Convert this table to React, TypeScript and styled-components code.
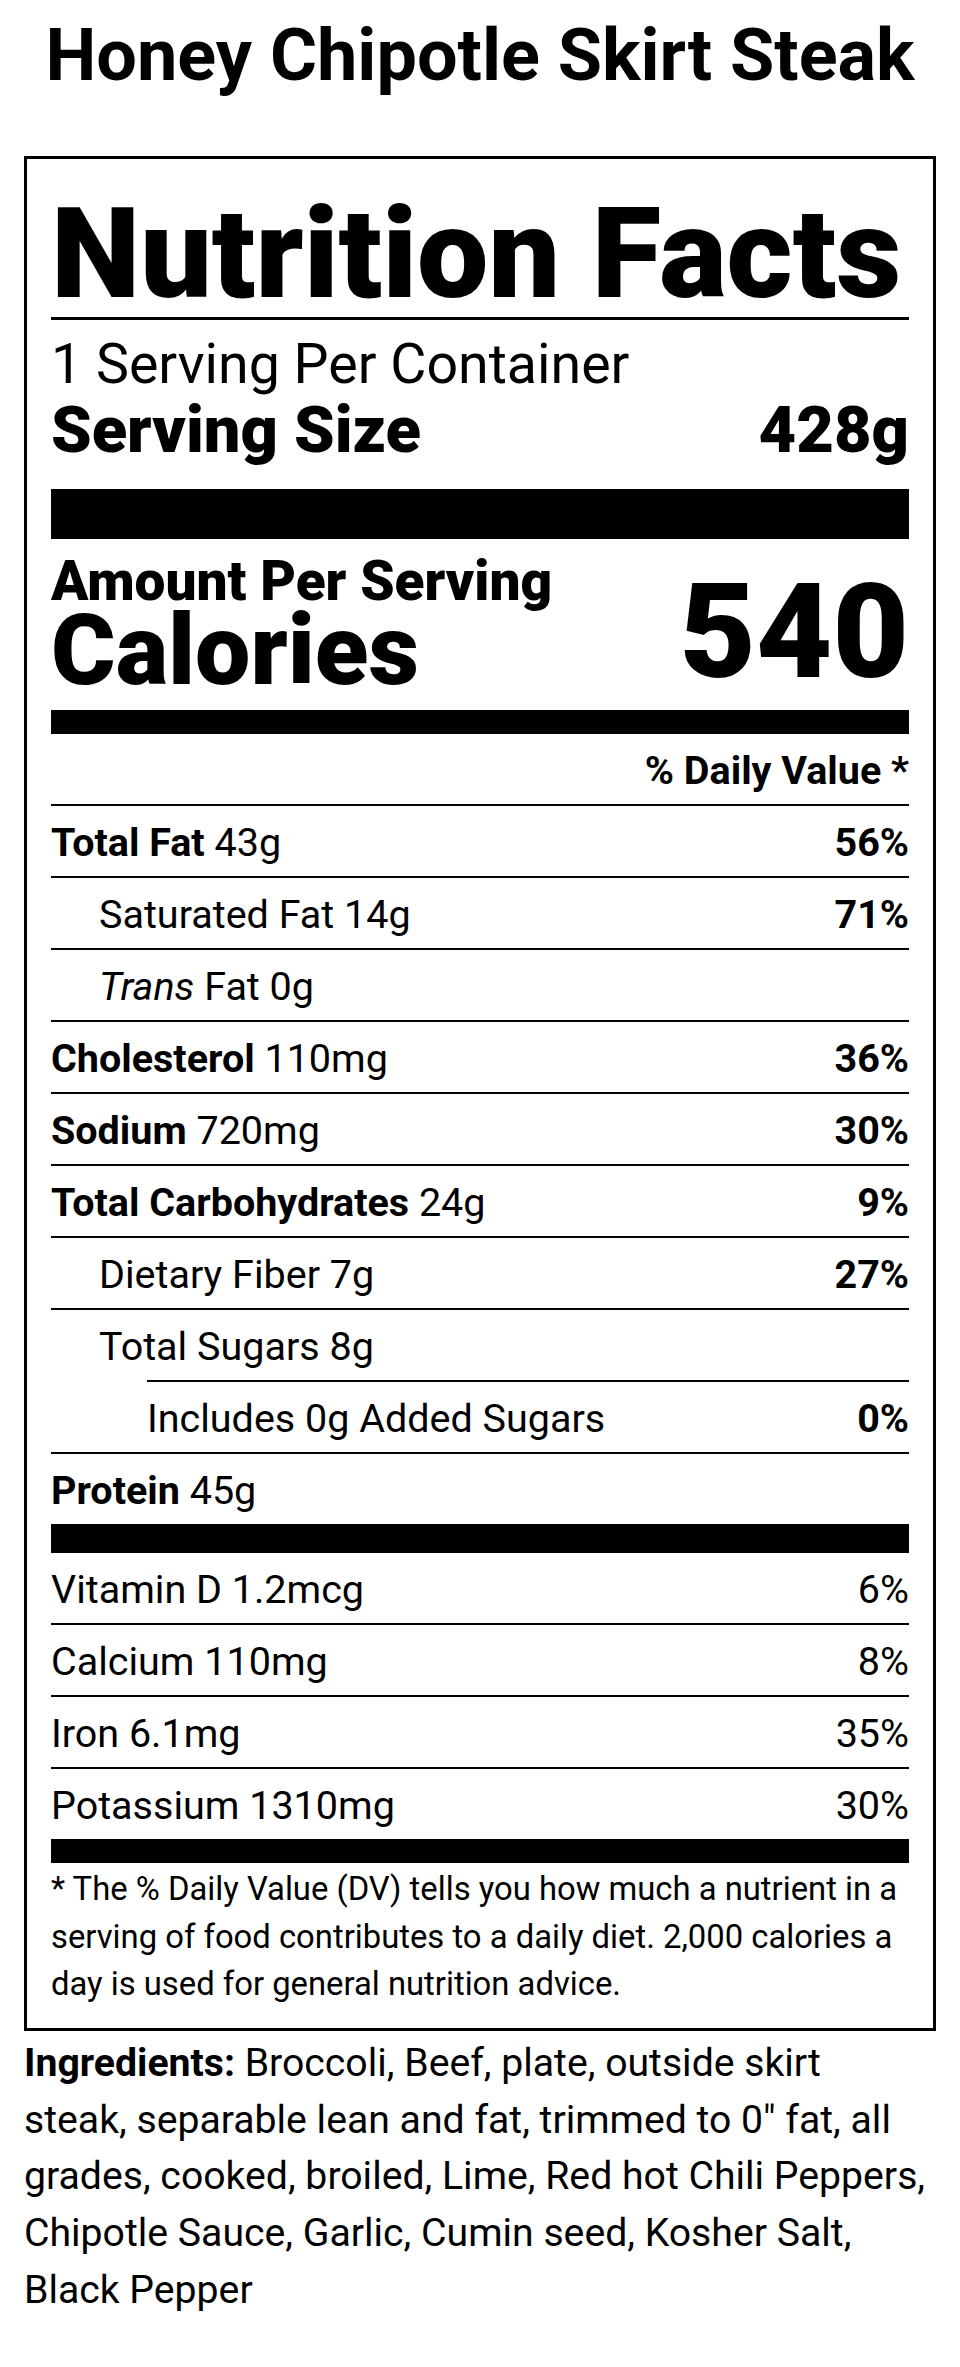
import React from 'react';
import styled, { createGlobalStyle } from 'styled-components';

const GlobalStyle = createGlobalStyle`
  html, body { margin: 0; padding: 0; background: #fff; }
  body {
    font-family: Roboto, "Liberation Sans", Arial, sans-serif;
    color: #000;
  }
`;

const Page = styled.main`
  padding: 14px 24px 40px;
`;

const Title = styled.h1`
  margin: 0 0 58px;
  font-size: 72px;
  font-weight: 700;
  line-height: 84px;
  text-align: center;
`;

const Label = styled.section`
  border: 3px solid #000;
  padding: 32px 24px 19px;
`;

const Heading = styled.h2`
  margin: 0;
  font-size: 127px;
  font-weight: 900;
  line-height: 126px;
  white-space: nowrap;
  border-bottom: 3px solid #000;
`;

const Servings = styled.div`
  margin-top: 14px;
  font-size: 55.5px;
  font-weight: 400;
  line-height: 61px;
`;

const ServingSize = styled.div`
  display: flex;
  justify-content: space-between;
  font-size: 65px;
  font-weight: 900;
  line-height: 70px;
`;

const Bar = styled.div<{ $h: number; $top?: number; $inset?: number }>`
  height: ${(p) => p.$h}px;
  margin-top: ${(p) => p.$top ?? 0}px;
  margin-left: ${(p) => p.$inset ?? 0}px;
  background: #000;
`;

const CaloriesBlock = styled.div`
  display: flex;
  justify-content: space-between;
  align-items: flex-end;
  margin-top: 17px;
`;

const CaloriesLeft = styled.div`
  display: flex;
  flex-direction: column;
`;

const AmountLabel = styled.div`
  font-size: 55px;
  font-weight: 900;
  line-height: 50px;
`;

const CaloriesLabel = styled.div`
  font-size: 98.5px;
  font-weight: 900;
  line-height: 90px;
`;

const CaloriesValue = styled.div`
  font-size: 132px;
  font-weight: 900;
  line-height: 128px;
`;

const Row = styled.div<{ $indent?: number; $padTop?: number; $padBottom?: number; $end?: boolean }>`
  display: flex;
  justify-content: ${(p) => (p.$end ? 'flex-end' : 'space-between')};
  align-items: baseline;
  padding: ${(p) => p.$padTop ?? 15.5}px 0 ${(p) => p.$padBottom ?? 10.5}px
    ${(p) => p.$indent ?? 0}px;
  font-size: 39.5px;
  line-height: 44px;
  white-space: nowrap;
`;

const Name = styled.span`
  font-weight: 400;
  b { font-weight: 700; }
  i { font-style: italic; }
`;

const Percent = styled.span<{ $bold?: boolean }>`
  font-weight: ${(p) => (p.$bold ? 700 : 400)};
`;

const Footnote = styled.p`
  margin: 3.5px 0 0;
  font-size: 32.8px;
  line-height: 47.5px;
  font-weight: 400;
`;

const Ingredients = styled.p`
  margin: 4px 0 0;
  font-size: 39.2px;
  line-height: 56.7px;
  font-weight: 400;
  b { font-weight: 700; }
`;

type Nutrient = {
  label: React.ReactNode;
  amount?: string;
  dv?: string;
  indent: number;
  rule: 'full' | 'inset' | 'none';
};

const nutrients: Nutrient[] = [
  { label: <b>Total Fat</b>, amount: '43g', dv: '56%', indent: 0, rule: 'full' },
  { label: 'Saturated Fat', amount: '14g', dv: '71%', indent: 48, rule: 'full' },
  { label: <><i>Trans</i> Fat</>, amount: '0g', indent: 48, rule: 'full' },
  { label: <b>Cholesterol</b>, amount: '110mg', dv: '36%', indent: 0, rule: 'full' },
  { label: <b>Sodium</b>, amount: '720mg', dv: '30%', indent: 0, rule: 'full' },
  { label: <b>Total Carbohydrates</b>, amount: '24g', dv: '9%', indent: 0, rule: 'full' },
  { label: 'Dietary Fiber', amount: '7g', dv: '27%', indent: 48, rule: 'full' },
  { label: 'Total Sugars', amount: '8g', indent: 48, rule: 'inset' },
  { label: 'Includes 0g Added Sugars', dv: '0%', indent: 96, rule: 'full' },
  { label: <b>Protein</b>, amount: '45g', indent: 0, rule: 'none' },
];

const vitamins = [
  { label: 'Vitamin D 1.2mcg', dv: '6%' },
  { label: 'Calcium 110mg', dv: '8%' },
  { label: 'Iron 6.1mg', dv: '35%' },
  { label: 'Potassium 1310mg', dv: '30%' },
];

export default function App() {
  return (
    <>
      <GlobalStyle />
      <Page>
        <Title>Honey Chipotle Skirt Steak</Title>
        <Label>
          <Heading>Nutrition Facts</Heading>
          <Servings>1 Serving Per Container</Servings>
          <ServingSize>
            <span>Serving Size</span>
            <span>428g</span>
          </ServingSize>
          <Bar $h={50} $top={24} />
          <CaloriesBlock>
            <CaloriesLeft>
              <AmountLabel>Amount Per Serving</AmountLabel>
              <CaloriesLabel>Calories</CaloriesLabel>
            </CaloriesLeft>
            <CaloriesValue>540</CaloriesValue>
          </CaloriesBlock>
          <Bar $h={24} $top={14.4} />
          <Row $end $padTop={14.5} $padBottom={11}>
            <Percent $bold>% Daily Value *</Percent>
          </Row>
          <Bar $h={2} />
          {nutrients.map((n, i) => (
            <React.Fragment key={i}>
              <Row $indent={n.indent}>
                <Name>
                  {n.label}
                  {n.amount ? ` ${n.amount}` : ''}
                </Name>
                {n.dv && <Percent $bold>{n.dv}</Percent>}
              </Row>
              {n.rule === 'full' && <Bar $h={2} />}
              {n.rule === 'inset' && <Bar $h={2} $inset={96} />}
            </React.Fragment>
          ))}
          <Bar $h={29} />
          {vitamins.map((v, i) => (
            <React.Fragment key={v.label}>
              <Row>
                <Name>{v.label}</Name>
                <Percent>{v.dv}</Percent>
              </Row>
              {i < vitamins.length - 1 && <Bar $h={2} />}
            </React.Fragment>
          ))}
          <Bar $h={24} />
          <Footnote>
            * The % Daily Value (DV) tells you how much a nutrient in a<br />
            serving of food contributes to a daily diet. 2,000 calories a<br />
            day is used for general nutrition advice.
          </Footnote>
        </Label>
        <Ingredients>
          <b>Ingredients:</b> Broccoli, Beef, plate, outside skirt<br />
          steak, separable lean and fat, trimmed to 0" fat, all<br />
          grades, cooked, broiled, Lime, Red hot Chili Peppers,<br />
          Chipotle Sauce, Garlic, Cumin seed, Kosher Salt,<br />
          Black Pepper
        </Ingredients>
      </Page>
    </>
  );
}
